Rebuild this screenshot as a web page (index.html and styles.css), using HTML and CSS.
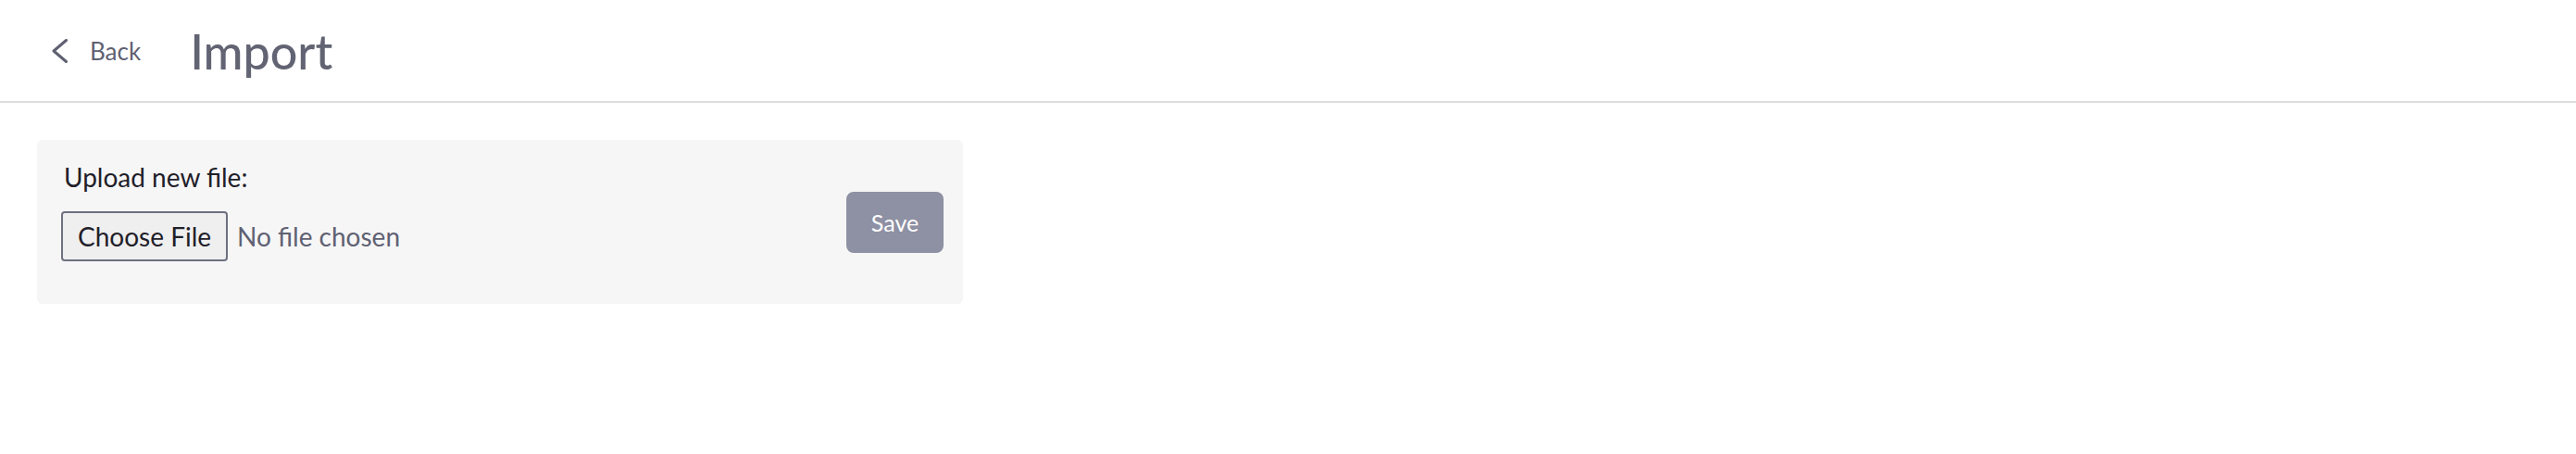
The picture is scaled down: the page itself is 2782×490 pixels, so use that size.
FILE: index.html
```html
<!DOCTYPE html>
<html lang="en">
<head>
  <meta charset="UTF-8" />
  <meta name="viewport" content="width=device-width, initial-scale=1.0" />
  <title>Import</title>
  <link rel="stylesheet" href="styles.css">
</head>
<body>
  <header class="topbar">
    <a class="back" href="#">
      <svg class="back-icon" width="20" height="26" viewBox="0 0 20 26">
        <path d="M16.5 1.5 L3 13 L16.5 24.5" fill="none" stroke="#5f6172" stroke-width="3" stroke-linecap="round" stroke-linejoin="round"/>
      </svg>
      <span>Back</span>
    </a>
    <h1>Import</h1>
  </header>

  <main class="content">
    <form class="upload-card">
      <div class="upload-field">
        <label for="file">Upload new file:</label>
        <input type="file" id="file" name="file" />
      </div>
      <button type="submit" class="save">Save</button>
    </form>
  </main>
</body>
</html>
```

FILE: styles.css
```css
body {
  margin: 0;
  font-family: Lato, "Open Sans", sans-serif;
  background: #fff;
  color: #5f6172;
}
.topbar {
  display: flex;
  align-items: center;
  height: 109px;
  padding-left: 55px;
  border-bottom: 2px solid #dedede;
}
.back {
  display: flex;
  align-items: center;
  color: #5f6172;
  text-decoration: none;
  font-size: 26px;
}
.back-icon {
  margin-right: 22px;
}
.topbar h1 {
  margin: 0 0 0 53px;
  font-size: 52px;
  font-weight: 500;
  color: #626473;
}
.content {
  padding: 40px 0 0 40px;
}
.upload-card {
  box-sizing: border-box;
  width: 1000px;
  height: 177px;
  background: #f6f6f6;
  border-radius: 6px;
  display: flex;
  align-items: center;
  justify-content: space-between;
  padding: 0 21px 0 26px;
}
.upload-field {
  align-self: flex-start;
  padding-top: 23px;
}
.upload-field label {
  display: block;
  margin: 0 0 20px 3px;
  font-size: 28px;
  color: #1f2029;
}
.upload-field input {
  font-family: inherit;
  font-size: 28px;
  color: #5f6172;
}
.upload-field input::file-selector-button {
  font-family: inherit;
  font-size: 28px;
  color: #1f2029;
  background: #efefef;
  border: 2px solid #6e7080;
  border-radius: 4px;
  padding: 8px 16px;
  margin-right: 10px;
}
.save {
  width: 105px;
  height: 66px;
  border: none;
  border-radius: 8px;
  background: #8e90a3;
  color: #fff;
  font-family: inherit;
  font-size: 25px;
}
```
